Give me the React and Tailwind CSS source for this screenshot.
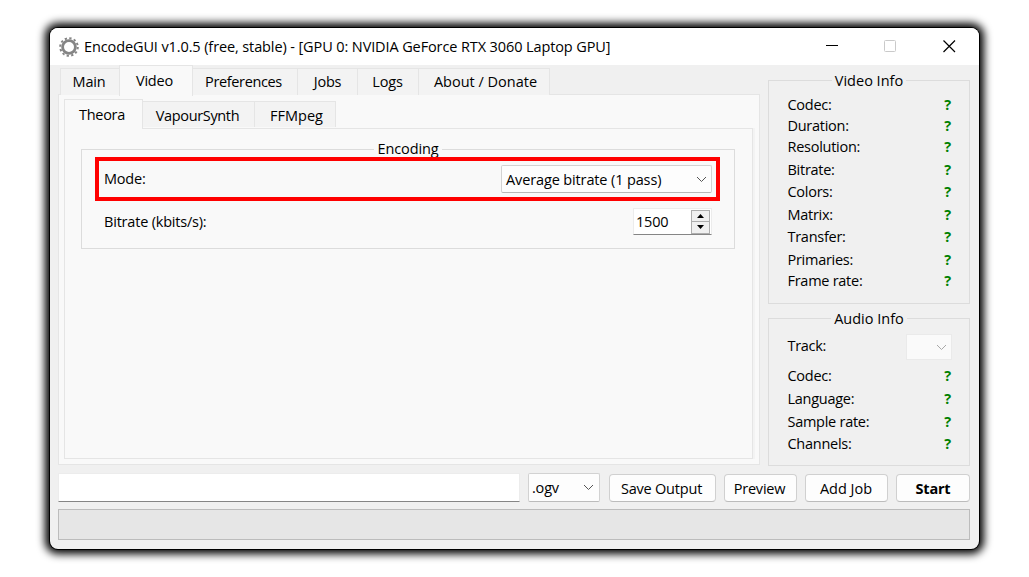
import React from "react";

function Chevron({ className = "" }) {
  return (
    <svg width="11" height="7" viewBox="0 0 11 7" className={className} fill="none" stroke="currentColor" strokeWidth="1">
      <path d="M1 1L5.5 5.5L10 1" />
    </svg>
  );
}

function Gear() {
  return (
    <svg width="20" height="20" viewBox="0 0 20 20" className="block shrink-0" fill="none" stroke="#858585">
      <circle cx="10" cy="10" r="6.4" strokeWidth="2.8" />
      <circle cx="10" cy="10" r="8.8" strokeWidth="2" strokeDasharray="2.3 2.308" />
    </svg>
  );
}

function Group({ title, legend, className, children }) {
  return (
    <section className={`flex flex-col border border-[#dcdcdc] ${className}`}>
      <h2 className={`h-5 self-center leading-5 ${legend}`}>{title}</h2>
      {children}
    </section>
  );
}

function Info({ label, className = "" }) {
  return (
    <div className={`flex h-5 items-center justify-between pr-[18px] pl-[18.5px] leading-5 tracking-[-0.27px] ${className}`}>
      <span>{label}</span>
      <b className="font-bold text-[#008000]">?</b>
    </div>
  );
}

function Button({ className, children }) {
  return (
    <button className={`flex h-7 shrink-0 items-center justify-center rounded border border-[#d0d0d0] border-b-[#bcbcbc] bg-[#fdfdfd] pt-px ${className}`}>
      {children}
    </button>
  );
}

const tabBase = "flex shrink-0 items-center justify-center border-[#e5e5e5]";

export default function App() {
  return (
    <div className="h-[577px] w-[1029px] overflow-hidden bg-white pt-7 pl-[50px] font-['Open_Sans','Noto_Sans',sans-serif] text-[14.5px] tracking-[-0.2px] whitespace-nowrap text-black">
      <main className="flex h-[521px] w-[929px] flex-col overflow-hidden rounded-lg bg-[#f0f0f0] shadow-[0_0_0_1px_#000,0_0_8px_5px_#000]">
        <header className="flex h-[37px] shrink-0 items-center bg-white pl-[9px]">
          <Gear />
          <h1 className="ml-[5px] tracking-[-0.11px]">EncodeGUI v1.0.5 (free, stable) - [GPU 0: NVIDIA GeForce RTX 3060 Laptop GPU]</h1>
          <svg width="132" height="14" viewBox="0 0 132 14" className="mr-[22px] mb-px ml-auto" fill="none">
            <path d="M1 6.5H13" stroke="#000" />
            <rect x="59.5" y="1.5" width="11" height="11" rx="1" stroke="#cacaca" />
            <path d="M118.5 1.5L130 13M130 1.5L118.5 13" stroke="#000" strokeWidth="1.2" />
          </svg>
        </header>
        <div className="flex h-[401px] shrink-0 pl-2">
          <div className="w-[702px]">
            <nav className="flex h-[30px] items-end pl-0.5">
              <a className={`${tabBase} h-[27px] w-[59px] border-t border-l bg-[#f3f3f3] pr-0.5`}>Main</a>
              <a className={`${tabBase} relative z-10 -mb-px h-[31px] w-[74px] border-x border-t bg-[#f9f9f9] pr-[3px]`}>Video</a>
              <a className={`${tabBase} h-[27px] w-[104px] border-t bg-[#f3f3f3] pr-[3px] tracking-[-0.36px]`}>Preferences</a>
              <a className={`${tabBase} h-[27px] w-[60px] border-t border-l bg-[#f3f3f3]`}>Jobs</a>
              <a className={`${tabBase} h-[27px] w-[61px] border-t border-l bg-[#f3f3f3] pr-px`}>Logs</a>
              <a className={`${tabBase} h-[27px] w-[132px] border-x border-t bg-[#f3f3f3] pl-[3px] tracking-[0px]`}>About / Donate</a>
            </nav>
            <div className="-mt-px h-[371px] border border-[#e5e5e5] bg-[#f9f9f9] pt-1 pl-[5px]">
              <nav className="flex h-[29px] items-end">
                <a className={`${tabBase} relative z-10 -mb-px h-[30px] w-[79px] border-x border-t bg-[#f9f9f9] pt-px pr-[3px] tracking-[-0.3px]`}>Theora</a>
                <a className={`${tabBase} mb-px h-[26px] w-[111px] border-t bg-[#f3f3f3] pt-[3px] pr-0.5 tracking-[-0.35px]`}>VapourSynth</a>
                <a className={`${tabBase} mb-px h-[26px] w-[82px] border-x border-t bg-[#f3f3f3] pt-[3px] pl-[3px] tracking-[0px]`}>FFMpeg</a>
              </nav>
              <div className="h-[331px] w-[689px] border border-[#e5e5e5] pt-5 pl-4 shadow-[2px_0_0_#f3f3f3]">
                <Group title="Encoding" className="h-[100px] w-[654px]" legend="-mt-[11px] bg-[#f9f9f9] px-[3px] tracking-[-0.1px]">
                  <div className="-mt-0.5 ml-[13px] flex h-11 w-[625px] shrink-0 items-center justify-between border-4 border-[#ff0000] pr-1 pl-[5px]">
                    <label>Mode:</label>
                    <div className="flex h-7 w-[211px] items-center justify-between rounded-[2px] border border-[#d2d2d2] border-b-[#b8b8b8] bg-[#fdfdfd] pr-1 pl-[4px]">
                      <span className="pt-0.5 tracking-[-0.13px]">Average bitrate (1 pass)</span>
                      <Chevron className="text-[#555]" />
                    </div>
                  </div>
                  <div className="mt-[7px] ml-[22px] flex w-[608px] items-center justify-between">
                    <label>Bitrate (kbits/s):</label>
                    <div className="flex h-[27px] w-[79px] items-center justify-between border border-[#ececec] border-b-[#858585] bg-white pr-px pl-0.5">
                      <span>1500</span>
                      <span className="flex h-[24px] w-[19px] flex-col border border-[#adadad] bg-[#f0f0f0]">
                        <span className="flex h-[11px] items-center justify-center border-b border-[#adadad]">
                          <svg width="7" height="4" viewBox="0 0 7 4"><path d="M0 4L3.5 0L7 4Z" /></svg>
                        </span>
                        <span className="flex h-[11px] items-center justify-center">
                          <svg width="7" height="4" viewBox="0 0 7 4"><path d="M0 0L3.5 4L7 0Z" /></svg>
                        </span>
                      </span>
                    </div>
                  </div>
                </Group>
              </div>
            </div>
          </div>
          <aside className="ml-2 flex w-[202px] flex-col pt-[15px]">
            <Group title="Video Info" className="h-[224px]" legend="-mt-[10px] bg-[#f0f0f0] px-[3px] tracking-[0px]">
              <Info label="Codec:" className="mt-1" />
              <Info label="Duration:" className="mt-px" />
              <Info label="Resolution:" className="mt-px" />
              <Info label="Bitrate:" className="mt-[3px]" />
              <Info label="Colors:" className="mt-0.5" />
              <Info label="Matrix:" className="mt-[3px]" />
              <Info label="Transfer:" className="mt-0.5" />
              <Info label="Primaries:" className="mt-[3px]" />
              <Info label="Frame rate:" className="mt-px" />
            </Group>
            <Group title="Audio Info" className="mt-3.5 h-[148px]" legend="-mt-[10px] bg-[#f0f0f0] px-[3px] tracking-[0px]">
              <div className="mt-[5px] flex h-[26px] shrink-0 items-center justify-between pr-[17px] pl-[18.5px]">
                <span className="pb-[3px] tracking-[-0.3px]">Track:</span>
                <span className="flex h-[26px] w-[46px] items-center justify-end border border-[#eaeaea] bg-[#fafafa] pr-1">
                  <Chevron className="text-[#a8a8a8]" />
                </span>
              </div>
              <Info label="Codec:" className="mt-[6px]" />
              <Info label="Language:" className="mt-[3px]" />
              <Info label="Sample rate:" className="mt-[3px]" />
              <Info label="Channels:" className="mt-0.5" />
            </Group>
          </aside>
        </div>
        <div className="mt-[7px] flex h-[29px] shrink-0 items-end pl-2">
          <div className="h-[29px] w-[462px] border border-[#ececec] border-b-[#858585] bg-white" />
          <div className="ml-2 flex h-[29px] w-[72px] items-center justify-between rounded-[2px] border border-[#d2d2d2] border-b-[#bcbcbc] bg-[#fdfdfd] pr-[5px] pl-[3px]">
            <span>.ogv</span>
            <Chevron className="text-[#555]" />
          </div>
          <Button className="ml-[9px] w-[107px] pr-0.5">Save Output</Button>
          <Button className="ml-2 w-[73px] pr-0.5">Preview</Button>
          <Button className="ml-2 w-[83px] pr-px tracking-[0px]">Add Job</Button>
          <Button className="ml-2 w-[74px] font-bold">Start</Button>
        </div>
        <div className="mt-[7px] ml-2 h-[31px] w-[912px] shrink-0 border border-[#bcbcbc] bg-[#e6e6e6]" />
      </main>
    </div>
  );
}
